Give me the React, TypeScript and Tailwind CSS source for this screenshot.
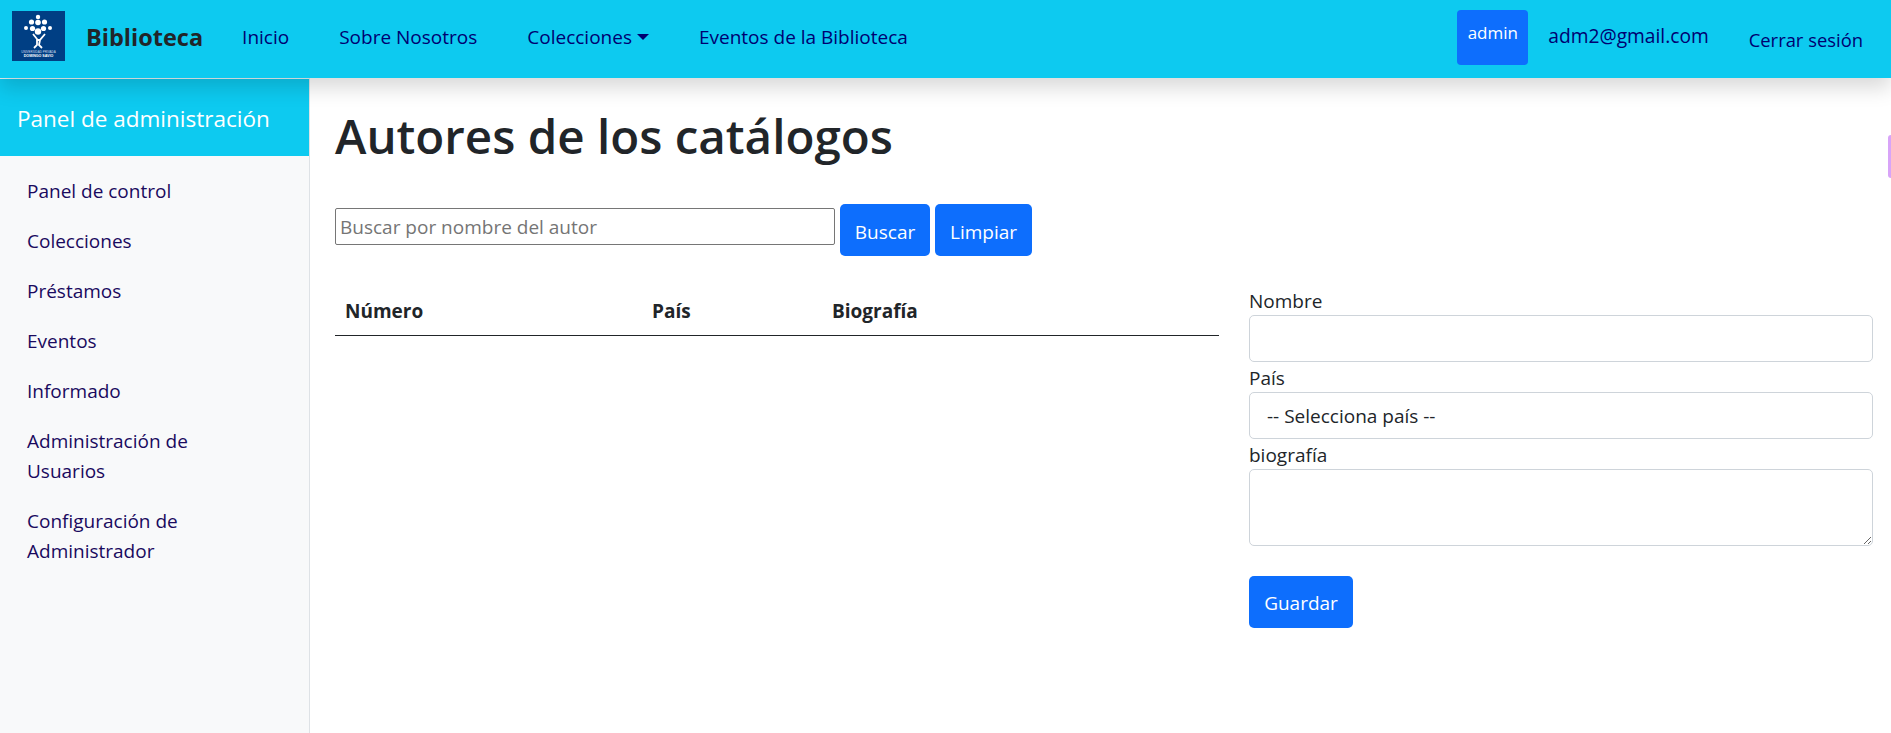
import React from 'react';

const sideItems = [
  'Panel de control',
  'Colecciones',
  'Préstamos',
  'Eventos',
  'Informado',
  'Administración de Usuarios',
  'Configuración de Administrador',
];

const Logo: React.FC = () => (
  <svg viewBox="0 0 53 50" className="w-[53px] h-[50px] shrink-0 mb-[2px]">
    <rect width="53" height="50" fill="#003f84" />
    <g fill="#fff">
      <circle cx="26" cy="6" r="2.2" />
      <circle cx="19.5" cy="11" r="2.6" />
      <circle cx="26" cy="11.5" r="2.8" />
      <circle cx="32.5" cy="11" r="2.6" />
      <circle cx="14" cy="17" r="2" />
      <circle cx="20.5" cy="17.5" r="2.6" />
      <circle cx="31.5" cy="17.5" r="2.6" />
      <circle cx="38" cy="17" r="2" />
      <circle cx="26" cy="20.5" r="3.2" />
    </g>
    <path d="M21 23l4 5v6l-3 3M33 23l-5 6-1 5 3 3M25 29h3" fill="none" stroke="#fff" strokeWidth="1.8" />
    <text x="26.5" y="41.5" textAnchor="middle" fontSize="3" fill="#cfdcec" fontFamily="Liberation Sans, sans-serif">UNIVERSIDAD PRIVADA</text>
    <text x="26.5" y="46" textAnchor="middle" fontSize="3.6" fontWeight="700" fill="#fff" fontFamily="Liberation Sans, sans-serif">DOMINGO SAVIO</text>
  </svg>
);

const App: React.FC = () => {
  return (
    <div className="h-[733px] overflow-hidden bg-white text-[19px] leading-[29px] text-[#212529] font-['Open_Sans',sans-serif] relative">
      {/* Navbar */}
      <nav className="relative z-10 h-[78px] flex items-center pl-3 pb-[4px] pr-[28px] bg-[#0dcaf0] shadow-[0_10px_19px_rgba(0,0,0,0.15)] text-[#000070]">
        <Logo />
        <span className="ml-[21px] text-[23.5px] font-bold text-[#212529]">Biblioteca</span>
        <a className="ml-[39px]">Inicio</a>
        <a className="ml-[50px]">Sobre Nosotros</a>
        <a className="ml-[50px] flex items-center">
          Colecciones
          <span className="ml-[5px] w-0 h-0 border-x-[6px] border-x-transparent border-t-[6px] border-t-[#000070]" />
        </a>
        <a className="ml-[50px]">Eventos de la Biblioteca</a>
        <div className="ml-auto flex items-center">
          <span className="w-[71px] h-[55px] rounded bg-[#0d6efd] text-white text-[17px] text-center pt-[8px]">admin</span>
          <span className="ml-[20px] mb-[3px] text-[19.2px]">adm2@gmail.com</span>
          <a className="ml-[40px] mt-[4px] text-[18.4px]">Cerrar sesión</a>
        </div>
      </nav>

      <div className="flex h-[655px]">
        {/* Sidebar */}
        <aside className="w-[310px] shrink-0 bg-[#f8f9fa] border-r border-[#dee2e6] border-t border-t-[#e6f3f6]">
          <div className="h-[77px] bg-[#0dcaf0] text-white text-[22.5px] flex items-center pl-[17px] pt-[1px]">
            Panel de administración
          </div>
          <ul className="pt-[10px] text-[#1a0a5e]">
            {sideItems.map((item) => (
              <li key={item} className="pl-[27px] pr-[60px] py-[10px] leading-[30px]">{item}</li>
            ))}
          </ul>
        </aside>

        {/* Main */}
        <main className="flex-1 pl-[25px] pr-[18px]">
          <h1 className="mt-[29px] text-[47.5px] leading-[58px] font-semibold">Autores de los catálogos</h1>
          <div className="mt-[39px] flex items-start">
            <input
              placeholder="Buscar por nombre del autor"
              className="mt-[4px] w-[500px] h-[37px] px-[4px] border border-[#767676] rounded-[2px] outline-none placeholder:text-[#757575]"
            />
            <button className="ml-[5px] w-[90px] h-[52px] rounded-[5px] bg-[#0d6efd] text-white pt-[4px]">Buscar</button>
            <button className="ml-[5px] w-[97px] h-[52px] rounded-[5px] bg-[#0d6efd] text-white pt-[4px]">Limpiar</button>
          </div>
          <div className="mt-[33px] flex items-start">
            <div className="w-[884px] shrink-0">
              <div className="flex h-[47px] items-center border-b border-[#212529] font-bold pl-[10px] pb-[2px]">
                <span className="w-[307px]">Número</span>
                <span className="w-[180px]">País</span>
                <span>Biografía</span>
              </div>
            </div>
            <form className="ml-[30px] flex-1 flex flex-col">
              <label className="h-[26px] leading-[25px]">Nombre</label>
              <input className="h-[47px] border border-[#ced4da] rounded-[5px] outline-none" />
              <label className="mt-[5px] h-[25px] leading-[23px]">País</label>
              <select className="h-[47px] border border-[#ced4da] rounded-[5px] bg-white px-[17px] pt-[2px] appearance-none outline-none">
                <option>-- Selecciona país --</option>
              </select>
              <label className="mt-[5px] h-[25px] leading-[23px]">biografía</label>
              <textarea className="h-[77px] border border-[#ced4da] rounded-[5px] outline-none" />
              <button className="mt-[30px] w-[104px] h-[52px] rounded-[5px] bg-[#0d6efd] text-white pt-[3px]">Guardar</button>
            </form>
          </div>
        </main>
      </div>

      {/* Browser extension tab on the right edge */}
      <div className="absolute right-0 top-[135px] w-[3px] h-[43px] rounded-l-[3px] bg-[#d8a4f8]" />
    </div>
  );
};

export default App;
